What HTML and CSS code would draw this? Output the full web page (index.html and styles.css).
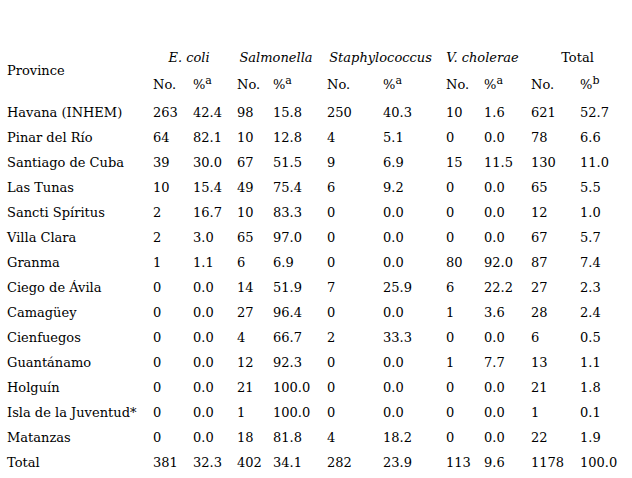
FILE: index.html
```html
<!DOCTYPE html>
<html>
<head>
<meta charset="utf-8">
<link rel="stylesheet" href="styles.css">
</head>
<body>
<div class="page">
<table class="tbl">
<colgroup>
<col class="c-prov"><col class="c1"><col class="c2"><col class="c3"><col class="c4"><col class="c5"><col class="c6"><col class="c7"><col class="c8"><col class="c9"><col class="c10">
</colgroup>
<thead>
<tr class="h1">
<th rowspan="2" class="prov-h">Province</th>
<th colspan="2" class="grp"><i>E. coli</i></th>
<th colspan="2" class="grp"><i>Salmonella</i></th>
<th colspan="2" class="grp"><i>Staphylococcus</i></th>
<th colspan="2" class="grp"><i>V. cholerae</i></th>
<th colspan="2" class="grp grp-last">Total</th>
</tr>
<tr class="h2">
<th>No.</th><th>%<sup>a</sup></th>
<th>No.</th><th>%<sup>a</sup></th>
<th>No.</th><th>%<sup>a</sup></th>
<th>No.</th><th>%<sup>a</sup></th>
<th>No.</th><th>%<sup>b</sup></th>
</tr>
</thead>
<tbody>
<tr><td>Havana (INHEM)</td><td>263</td><td>42.4</td><td>98</td><td>15.8</td><td>250</td><td>40.3</td><td>10</td><td>1.6</td><td>621</td><td>52.7</td></tr>
<tr><td>Pinar del Río</td><td>64</td><td>82.1</td><td>10</td><td>12.8</td><td>4</td><td>5.1</td><td>0</td><td>0.0</td><td>78</td><td>6.6</td></tr>
<tr><td>Santiago de Cuba</td><td>39</td><td>30.0</td><td>67</td><td>51.5</td><td>9</td><td>6.9</td><td>15</td><td>11.5</td><td>130</td><td>11.0</td></tr>
<tr><td>Las Tunas</td><td>10</td><td>15.4</td><td>49</td><td>75.4</td><td>6</td><td>9.2</td><td>0</td><td>0.0</td><td>65</td><td>5.5</td></tr>
<tr><td>Sancti Spíritus</td><td>2</td><td>16.7</td><td>10</td><td>83.3</td><td>0</td><td>0.0</td><td>0</td><td>0.0</td><td>12</td><td>1.0</td></tr>
<tr><td>Villa Clara</td><td>2</td><td>3.0</td><td>65</td><td>97.0</td><td>0</td><td>0.0</td><td>0</td><td>0.0</td><td>67</td><td>5.7</td></tr>
<tr><td>Granma</td><td>1</td><td>1.1</td><td>6</td><td>6.9</td><td>0</td><td>0.0</td><td>80</td><td>92.0</td><td>87</td><td>7.4</td></tr>
<tr><td>Ciego de Ávila</td><td>0</td><td>0.0</td><td>14</td><td>51.9</td><td>7</td><td>25.9</td><td>6</td><td>22.2</td><td>27</td><td>2.3</td></tr>
<tr><td>Camagüey</td><td>0</td><td>0.0</td><td>27</td><td>96.4</td><td>0</td><td>0.0</td><td>1</td><td>3.6</td><td>28</td><td>2.4</td></tr>
<tr><td>Cienfuegos</td><td>0</td><td>0.0</td><td>4</td><td>66.7</td><td>2</td><td>33.3</td><td>0</td><td>0.0</td><td>6</td><td>0.5</td></tr>
<tr><td>Guantánamo</td><td>0</td><td>0.0</td><td>12</td><td>92.3</td><td>0</td><td>0.0</td><td>1</td><td>7.7</td><td>13</td><td>1.1</td></tr>
<tr><td>Holguín</td><td>0</td><td>0.0</td><td>21</td><td>100.0</td><td>0</td><td>0.0</td><td>0</td><td>0.0</td><td>21</td><td>1.8</td></tr>
<tr><td>Isla de la Juventud*</td><td>0</td><td>0.0</td><td>1</td><td>100.0</td><td>0</td><td>0.0</td><td>0</td><td>0.0</td><td>1</td><td>0.1</td></tr>
<tr><td>Matanzas</td><td>0</td><td>0.0</td><td>18</td><td>81.8</td><td>4</td><td>18.2</td><td>0</td><td>0.0</td><td>22</td><td>1.9</td></tr>
<tr><td>Total</td><td>381</td><td>32.3</td><td>402</td><td>34.1</td><td>282</td><td>23.9</td><td>113</td><td>9.6</td><td>1178</td><td>100.0</td></tr>
</tbody>
</table>
</div>
</body>
</html>
```

FILE: styles.css
```css
html, body {
  margin: 0;
  padding: 0;
  background: #ffffff;
}
.page {
  padding: 45px 0 0 7px;
}
.tbl {
  border-collapse: collapse;
  table-layout: fixed;
  width: 625px;
  font-family: "DejaVu Serif", "Liberation Serif", serif;
  font-size: 13px;
  color: #000;
}
.c-prov { width: 146px; }
.c1 { width: 40px; }
.c2 { width: 44px; }
.c3 { width: 36px; }
.c4 { width: 54px; }
.c5 { width: 56px; }
.c6 { width: 63px; }
.c7 { width: 38px; }
.c8 { width: 47px; }
.c9 { width: 49px; }
.c10 { width: 52px; }
.tbl th, .tbl td {
  padding: 0;
  text-align: left;
  font-weight: normal;
  vertical-align: top;
  line-height: 25px;
  white-space: nowrap;
}
.h1 { height: 27px; }
.h2 { height: 28px; }
.tbl tbody tr { height: 25px; }
.tbl th.prov-h { padding-top: 13px; }
.tbl th.grp {
  text-align: center;
  padding-right: 12px;
}
.tbl th.grp-last { padding-right: 8px; }
.tbl sup {
  font-size: 11px;
  line-height: 0;
  vertical-align: 5px;
}
```
